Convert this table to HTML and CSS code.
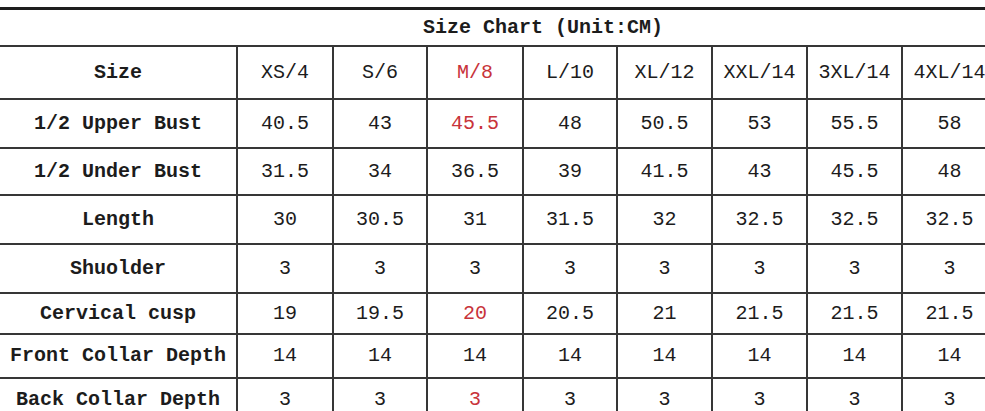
FILE: index.html
```html
<!DOCTYPE html>
<html>
<head>
<meta charset="utf-8">
<link rel="stylesheet" href="styles.css">
</head>
<body>
<table class="chart">
  <colgroup>
    <col class="c-label">
    <col class="c96"><col class="c94"><col class="c96"><col class="c94">
    <col class="c95"><col class="c95"><col class="c95"><col class="c95">
  </colgroup>
  <tr class="r-title"><th colspan="9" class="title">Size Chart (Unit:CM)</th></tr>
  <tr class="r-head">
    <th>Size</th><td>XS/4</td><td>S/6</td><td class="red">M/8</td><td>L/10</td><td>XL/12</td><td>XXL/14</td><td>3XL/14</td><td>4XL/14</td>
  </tr>
  <tr class="r1">
    <th>1/2 Upper Bust</th><td>40.5</td><td>43</td><td class="red">45.5</td><td>48</td><td>50.5</td><td>53</td><td>55.5</td><td>58</td>
  </tr>
  <tr class="r2">
    <th>1/2 Under Bust</th><td>31.5</td><td>34</td><td>36.5</td><td>39</td><td>41.5</td><td>43</td><td>45.5</td><td>48</td>
  </tr>
  <tr class="r3">
    <th>Length</th><td>30</td><td>30.5</td><td>31</td><td>31.5</td><td>32</td><td>32.5</td><td>32.5</td><td>32.5</td>
  </tr>
  <tr class="r4">
    <th>Shuolder</th><td>3</td><td>3</td><td>3</td><td>3</td><td>3</td><td>3</td><td>3</td><td>3</td>
  </tr>
  <tr class="r5">
    <th>Cervical cusp</th><td>19</td><td>19.5</td><td class="red">20</td><td>20.5</td><td>21</td><td>21.5</td><td>21.5</td><td>21.5</td>
  </tr>
  <tr class="r6">
    <th>Front Collar Depth</th><td>14</td><td>14</td><td>14</td><td>14</td><td>14</td><td>14</td><td>14</td><td>14</td>
  </tr>
  <tr class="r7">
    <th>Back Collar Depth</th><td>3</td><td>3</td><td class="red">3</td><td>3</td><td>3</td><td>3</td><td>3</td><td>3</td>
  </tr>
</table>
</body>
</html>
```

FILE: styles.css
```css
html, body {
  margin: 0;
  padding: 0;
  background: #ffffff;
  overflow: hidden;
}

body {
  padding-top: 7px;
  font-family: "Liberation Mono", "DejaVu Sans Mono", monospace;
  color: #1c1c1c;
}

.chart {
  border-collapse: collapse;
  table-layout: fixed;
  width: 997px;
  font-size: 20px;
  border-top: 3px solid #1e1e1e;
}

.c-label { width: 237px; }
.c96 { width: 96px; }
.c94 { width: 94px; }
.c95 { width: 95px; }

.chart th,
.chart td {
  padding: 0;
  text-align: center;
  vertical-align: middle;
  border: 2px solid #363636;
  white-space: nowrap;
}

.chart tr > :first-child { border-left: none; }

.chart th { font-weight: bold; }
.chart td { font-weight: normal; }

.title {
  border-top: none;
  padding-left: 90px !important;
}

.red { color: #c8333a; }

.r-title { height: 37px; }
.r-head { height: 53px; }
.r1 { height: 49px; }
.r2 { height: 47px; }
.r3 { height: 49px; }
.r4 { height: 49px; }
.r5 { height: 41px; }
.r6 { height: 44px; }
.r7 { height: 44px; }
```
